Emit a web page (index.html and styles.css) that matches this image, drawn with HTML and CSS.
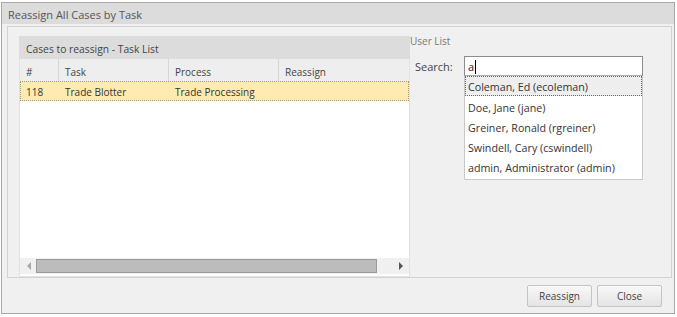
FILE: index.html
```html
<!DOCTYPE html>
<html lang="en">
<head>
  <meta charset="UTF-8">
  <title>Reassign All Cases by Task</title>
  <link rel="stylesheet" href="styles.css">
</head>
<body>
  <div class="dialog">
    <div class="dialog-title">Reassign All Cases by Task</div>

    <div class="dialog-body">
      <div class="frame">
        <div class="task-panel">
          <div class="panel-header">Cases to reassign - Task List</div>
          <div class="grid">
            <div class="grid-head">
              <div class="col col-num">#</div>
              <div class="col col-task">Task</div>
              <div class="col col-process">Process</div>
              <div class="col col-reassign">Reassign</div>
            </div>
            <div class="grid-rows">
              <div class="grid-row selected">
                <div class="col col-num">118</div>
                <div class="col col-task">Trade Blotter</div>
                <div class="col col-process">Trade Processing</div>
                <div class="col col-reassign"></div>
              </div>
            </div>
            <div class="hscroll">
              <span class="arrow arrow-left"></span>
              <div class="track"><div class="thumb"></div></div>
              <span class="arrow arrow-right"></span>
            </div>
          </div>
        </div>

        <div class="user-panel">
          <div class="user-title">User List</div>
          <div class="search-row">
            <label class="search-label">Search:</label>
            <div class="search-box">
              <div class="search-input">a<span class="caret"></span></div>
              <ul class="suggest">
                <li class="active">Coleman, Ed (ecoleman)</li>
                <li>Doe, Jane (jane)</li>
                <li>Greiner, Ronald (rgreiner)</li>
                <li>Swindell, Cary (cswindell)</li>
                <li>admin, Administrator (admin)</li>
              </ul>
            </div>
          </div>
        </div>
      </div>

      <div class="buttons">
        <button class="btn">Reassign</button>
        <button class="btn">Close</button>
      </div>
    </div>
  </div>
</body>
</html>
```

FILE: styles.css
```css
body {
  margin: 0;
  background: #ffffff;
  font-family: 'Open Sans', 'Segoe UI', sans-serif;
  font-size: 11px;
  color: #333;
}
.dialog {
  margin: 2px 0 0 1px;
  width: 672px;
  height: 310px;
  border: 1px solid #a8a8a8;
  background: #f0f0f0;
  display: flex;
  flex-direction: column;
}
.dialog-title {
  height: 21px;
  line-height: 23px;
  padding-left: 6px;
  background: #dcdcdc;
  color: #555;
}
.dialog-body {
  flex: 1;
  display: flex;
  flex-direction: column;
  padding: 2px 2px 0 5px;
}
.frame {
  height: 252px;
  border: 1px solid #d2d2d2;
  display: flex;
  padding: 9px 0 0 11px;
  box-sizing: border-box;
}

/* left: task list */
.task-panel {
  width: 391px;
  height: 241px;
  display: flex;
  flex-direction: column;
}
.panel-header {
  height: 23px;
  line-height: 26px;
  padding-left: 7px;
  background: #dcdcdc;
  color: #444;
  font-size: 10.3px;
}
.grid {
  flex: 1;
  display: flex;
  flex-direction: column;
  border: 1px solid #e2e2e2;
  border-top: none;
  background: #fff;
  font-size: 10px;
}
.grid-head, .grid-row {
  display: flex;
}
.grid-head {
  height: 22px;
  line-height: 26px;
  background: #eeeeee;
  color: #444;
}
.grid-head .col {
  border-right: 1px solid #d6d6d6;
}
.grid-head .col-reassign {
  border-right: none;
}
.col {
  padding-left: 6px;
  box-sizing: border-box;
  white-space: nowrap;
}
.col-num { width: 39px; }
.col-task { width: 110px; }
.col-process { width: 110px; }
.col-reassign { flex: 1; }
.grid-rows {
  flex: 1;
}
.grid-row {
  height: 20px;
  line-height: 20px;
  box-sizing: border-box;
}
.grid-row.selected {
  background: #ffebb1;
  border: 1px dotted #a89a70;
}
.grid-row.selected .col-num {
  width: 38px;
  padding-left: 5px;
}
.hscroll {
  height: 16px;
  margin: 0 0 2px;
  background: #f0f0f0;
  display: flex;
  align-items: center;
}
.arrow {
  width: 0;
  height: 0;
  border-top: 4px solid transparent;
  border-bottom: 4px solid transparent;
}
.arrow-left {
  margin-left: 7px;
  border-right: 4px solid #a8a8a8;
}
.arrow-right {
  margin-right: 6px;
  border-left: 4px solid #555;
}
.track {
  flex: 1;
  padding: 0 22px 0 5px;
}
.thumb {
  height: 12px;
  background: #bcbcbc;
  border: 1px solid #9a9a9a;
}

/* right: user list */
.user-panel {
  flex: 1;
  position: relative;
}
.user-title {
  margin-top: -3px;
  color: #777;
  line-height: 16px;
  font-size: 10px;
}
.search-row {
  display: flex;
  margin-top: 7px;
  padding-left: 5px;
}
.search-label {
  width: 49px;
  line-height: 22px;
  color: #444;
}
.search-box {
  position: relative;
  width: 179px;
}
.search-input {
  height: 20px;
  line-height: 20px;
  box-sizing: border-box;
  border: 1px solid #8c8c8c;
  border-bottom-color: #b0b0b0;
  background: #fff;
  padding-left: 3px;
  color: #222;
}
.caret {
  display: inline-block;
  width: 1px;
  height: 14px;
  background: #000;
  vertical-align: -3px;
  margin-left: 1px;
}
.suggest {
  position: absolute;
  top: 20px;
  left: 0;
  right: 0;
  margin: 0;
  padding: 0 0 2px;
  list-style: none;
  background: #fff;
  border: 1px solid #c8c8c8;
  border-top: none;
  font-size: 10.7px;
}
.suggest li {
  height: 20px;
  line-height: 22px;
  padding-left: 3px;
  color: #333;
}
.suggest li.active {
  background: #eeeeee;
  border: 1px dotted #666;
  line-height: 20px;
  box-sizing: border-box;
  padding-left: 2px;
  margin-bottom: 1px;
}

/* footer */
.buttons {
  flex: 1;
  display: flex;
  justify-content: flex-end;
  align-items: flex-start;
  gap: 5px;
  padding: 7px 10px 0 0;
}
.btn {
  width: 65px;
  height: 22px;
  font-family: inherit;
  font-size: 10px;
  color: #444;
  border: 1px solid #c4c4c4;
  border-radius: 2px;
  background: linear-gradient(#f8f8f8, #e4e4e4);
  padding: 0;
}
```
